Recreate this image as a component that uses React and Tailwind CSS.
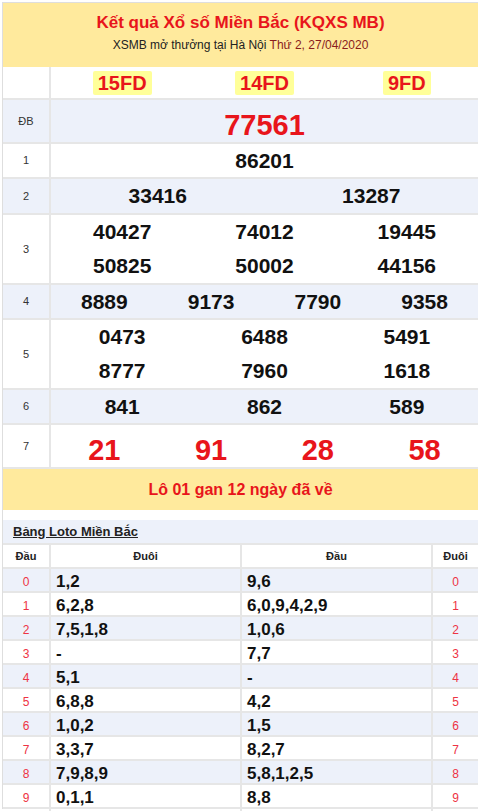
import React from "react"

const font = { fontFamily: '"Liberation Sans", Arial, sans-serif' }

const prizes = [
  { label: "ĐB", rows: [["77561"]], big: true, h: "h-[44px]" },
  { label: "1", rows: [["86201"]], h: "h-[35px]" },
  { label: "2", rows: [["33416", "13287"]], h: "h-[36px]" },
  { label: "3", rows: [["40427", "74012", "19445"], ["50825", "50002", "44156"]], h: "h-[70px]" },
  { label: "4", rows: [["8889", "9173", "7790", "9358"]], h: "h-[35px]" },
  { label: "5", rows: [["0473", "6488", "5491"], ["8777", "7960", "1618"]], h: "h-[70px]" },
  { label: "6", rows: [["841", "862", "589"]], h: "h-[35px]" },
  { label: "7", rows: [["21", "91", "28", "58"]], big: true, h: "h-[44px]" },
]

const loto = [
  ["1,2", "9,6"],
  ["6,2,8", "6,0,9,4,2,9"],
  ["7,5,1,8", "1,0,6"],
  ["-", "7,7"],
  ["5,1", "-"],
  ["6,8,8", "4,2"],
  ["1,0,2", "1,5"],
  ["3,3,7", "8,2,7"],
  ["7,9,8,9", "5,8,1,2,5"],
  ["0,1,1", "8,8"],
]

export default function App() {
  return (
    <div className="w-[480px] h-[811px] bg-white pl-[2px] pt-[2px] overflow-hidden" style={font}>
      <div className="w-[476px] border-l border-t border-[#dedede]">
        {/* HEADER */}
        <div className="h-[64px] bg-[#ffea9d] flex flex-col items-center pt-[10px]">
          <h1 className="text-[17px] font-bold text-[#e8151b] leading-[20px]">Kết quả Xổ số Miền Bắc (KQXS MB)</h1>
          <p className="text-[12px] text-[#222] mt-[4px] leading-[16px]">
            XSMB mở thưởng tại Hà Nội <span className="text-[#8a1c1c]">Thứ 2, 27/04/2020</span>
          </p>
        </div>

        {/* CODES */}
        <div className="flex h-[33px] border-b-2 border-[#e6e6e6]">
          <div className="w-[48px] border-r-2 border-[#e6e6e6]" />
          <div className="flex-1 grid grid-cols-3 items-center">
            {["15FD", "14FD", "9FD"].map((c) => (
              <div key={c} className="flex justify-center">
                <span className="bg-[#ffff99] text-[#e8151b] font-bold text-[20px] leading-[24px] px-[5px] rounded-[2px]">{c}</span>
              </div>
            ))}
          </div>
        </div>

        {/* PRIZES */}
        {prizes.map((p, i) => (
          <div key={p.label} className={`flex ${p.h} border-b-2 border-[#e6e6e6] ${i % 2 === 0 ? "bg-[#edf1fa]" : "bg-white"}`}>
            <div className="w-[48px] border-r-2 border-[#e6e6e6] flex items-center justify-center text-[11px] text-[#333]">{p.label}</div>
            <div className="flex-1 flex flex-col justify-center">
              {p.rows.map((r, j) => (
                <div
                  key={j}
                  className={`grid ${r.length === 1 ? "grid-cols-1" : r.length === 2 ? "grid-cols-2" : r.length === 3 ? "grid-cols-3" : "grid-cols-4"} h-[35px] items-center`}
                >
                  {r.map((n) => (
                    <span
                      key={n}
                      className={`text-center font-bold ${p.big ? "text-[29px] text-[#e8151b]" : "text-[21px] text-[#111]"}`}
                    >
                      {n}
                    </span>
                  ))}
                </div>
              ))}
            </div>
          </div>
        ))}

        {/* GAN */}
        <div className="h-[41px] bg-[#ffea9d] flex items-center justify-center text-[16px] font-bold text-[#e8151b]">
          Lô 01 gan 12 ngày đã về
        </div>
        <div className="h-[10px] bg-white" />

        {/* LOTO */}
        <div className="h-[25px] bg-[#edf1fa] flex items-center pl-[10px] border-b-2 border-[#e6e6e6]">
          <span className="text-[13px] font-bold underline text-[#222]">Bảng Loto Miền Bắc</span>
        </div>
        <div className="grid grid-cols-[48px_191px_191px_1fr] h-[24px] border-b-2 border-[#e6e6e6] text-[11px] font-bold text-[#222]">
          <div className="flex items-center justify-center border-r-2 border-[#e6e6e6]">Đầu</div>
          <div className="flex items-center justify-center border-r-2 border-[#e6e6e6]">Đuôi</div>
          <div className="flex items-center justify-center border-r-2 border-[#e6e6e6]">Đầu</div>
          <div className="flex items-center justify-center">Đuôi</div>
        </div>
        {loto.map((r, i) => (
          <div
            key={i}
            className={`grid grid-cols-[48px_191px_191px_1fr] h-[24px] border-b-2 border-[#e6e6e6] ${i % 2 === 0 ? "bg-[#edf1fa]" : "bg-white"}`}
          >
            <div className="flex items-center justify-center border-r-2 border-[#e6e6e6] text-[12px] text-[#ee3344]">{i}</div>
            <div className="flex items-center pl-[5px] border-r-2 border-[#e6e6e6] text-[17px] font-bold text-[#111]">{r[0]}</div>
            <div className="flex items-center pl-[5px] border-r-2 border-[#e6e6e6] text-[17px] font-bold text-[#111]">{r[1]}</div>
            <div className="flex items-center justify-center text-[12px] text-[#ee3344]">{i}</div>
          </div>
        ))}
      </div>
    </div>
  )
}
